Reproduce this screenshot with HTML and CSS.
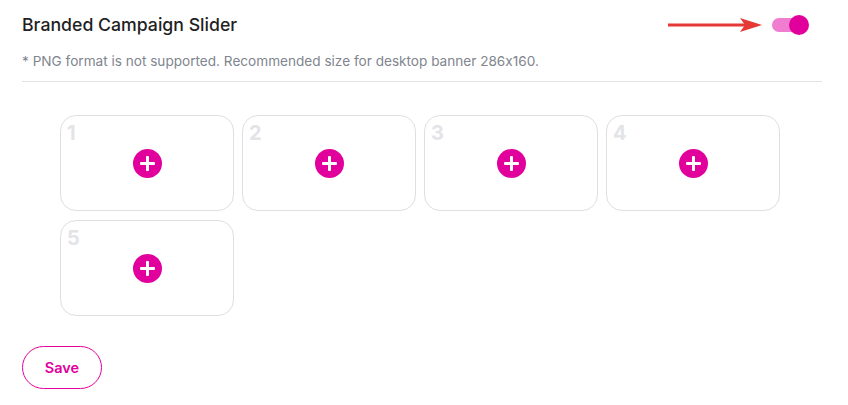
FILE: index.html
```html
<!DOCTYPE html>
<html>
<head>
<meta charset="utf-8">
<link rel="stylesheet" href="styles.css">
</head>
<body>
<div class="page">
  <div class="header">
    <h1 class="title">Branded Campaign Slider</h1>
    <div class="controls">
      <svg class="arrow" width="94" height="14" viewBox="0 0 94 14">
        <line x1="0" y1="7" x2="80" y2="7" stroke="#e53935" stroke-width="3"/>
        <polygon points="72,0 94,7 72,14 77,7" fill="#e53935"/>
      </svg>
      <div class="toggle"><span class="knob"></span></div>
    </div>
  </div>
  <p class="note">* PNG format is not supported. Recommended size for desktop banner 286x160.</p>
  <div class="divider"></div>
  <div class="grid">
    <div class="slot"><span class="num">1</span><span class="plus"></span></div>
    <div class="slot"><span class="num">2</span><span class="plus"></span></div>
    <div class="slot"><span class="num">3</span><span class="plus"></span></div>
    <div class="slot"><span class="num">4</span><span class="plus"></span></div>
    <div class="slot"><span class="num">5</span><span class="plus"></span></div>
  </div>
  <button class="save">Save</button>
</div>
</body>
</html>
```
FILE: styles.css
```css
* { box-sizing: border-box; }
body {
  margin: 0;
  background: #fff;
  font-family: Inter, "Noto Sans", sans-serif;
  font-feature-settings: "calt" 0;
}
.page {
  padding: 13px 26px 0 22px;
  width: 848px;
}
.header {
  display: flex;
  align-items: center;
  justify-content: space-between;
  height: 24px;
}
.title {
  margin: 0;
  font-size: 17.7px;
  font-weight: 500;
  color: #1f1f24;
  line-height: 24px;
}
.controls {
  display: flex;
  align-items: center;
  gap: 10px;
  padding-right: 13px;
}
.arrow { display: block; }
.toggle {
  position: relative;
  width: 28px;
  height: 14px;
  border-radius: 7px;
  background: #f07dcf;
  margin-right: 9px;
}
.knob {
  position: absolute;
  width: 20px;
  height: 20px;
  border-radius: 50%;
  background: #e2009d;
  top: -3px;
  left: 17px;
}
.note {
  margin: 15px 0 0;
  font-size: 13.6px;
  line-height: 18px;
  color: #80858e;
}
.divider {
  height: 1px;
  background: #e2e2e2;
  margin-top: 11px;
}
.grid {
  display: grid;
  grid-template-columns: repeat(4, 174px);
  grid-auto-rows: 96px;
  column-gap: 8px;
  row-gap: 9px;
  margin: 33px 0 0 38px;
}
.slot {
  position: relative;
  border: 1px solid #dedfe3;
  border-radius: 16px;
  display: flex;
  align-items: center;
  justify-content: center;
}
.num {
  position: absolute;
  top: 5px;
  left: 6px;
  font-size: 20px;
  font-weight: 700;
  color: #e3e4e8;
  line-height: 24px;
}
.plus {
  position: relative;
  width: 29px;
  height: 29px;
  border-radius: 50%;
  background: #e2009d;
}
.plus::before, .plus::after {
  content: "";
  position: absolute;
  background: #fff;
  border-radius: 1px;
}
.plus::before { width: 15px; height: 3px; left: 7px; top: 13px; }
.plus::after { width: 3px; height: 15px; left: 13px; top: 7px; }
.save {
  margin-top: 30px;
  width: 80px;
  height: 43px;
  border: 1px solid #e2009d;
  border-radius: 22px;
  background: #fff;
  color: #e2009d;
  font-family: Inter, "Noto Sans", sans-serif;
  font-size: 14.5px;
  font-weight: 600;
  cursor: pointer;
}
```
